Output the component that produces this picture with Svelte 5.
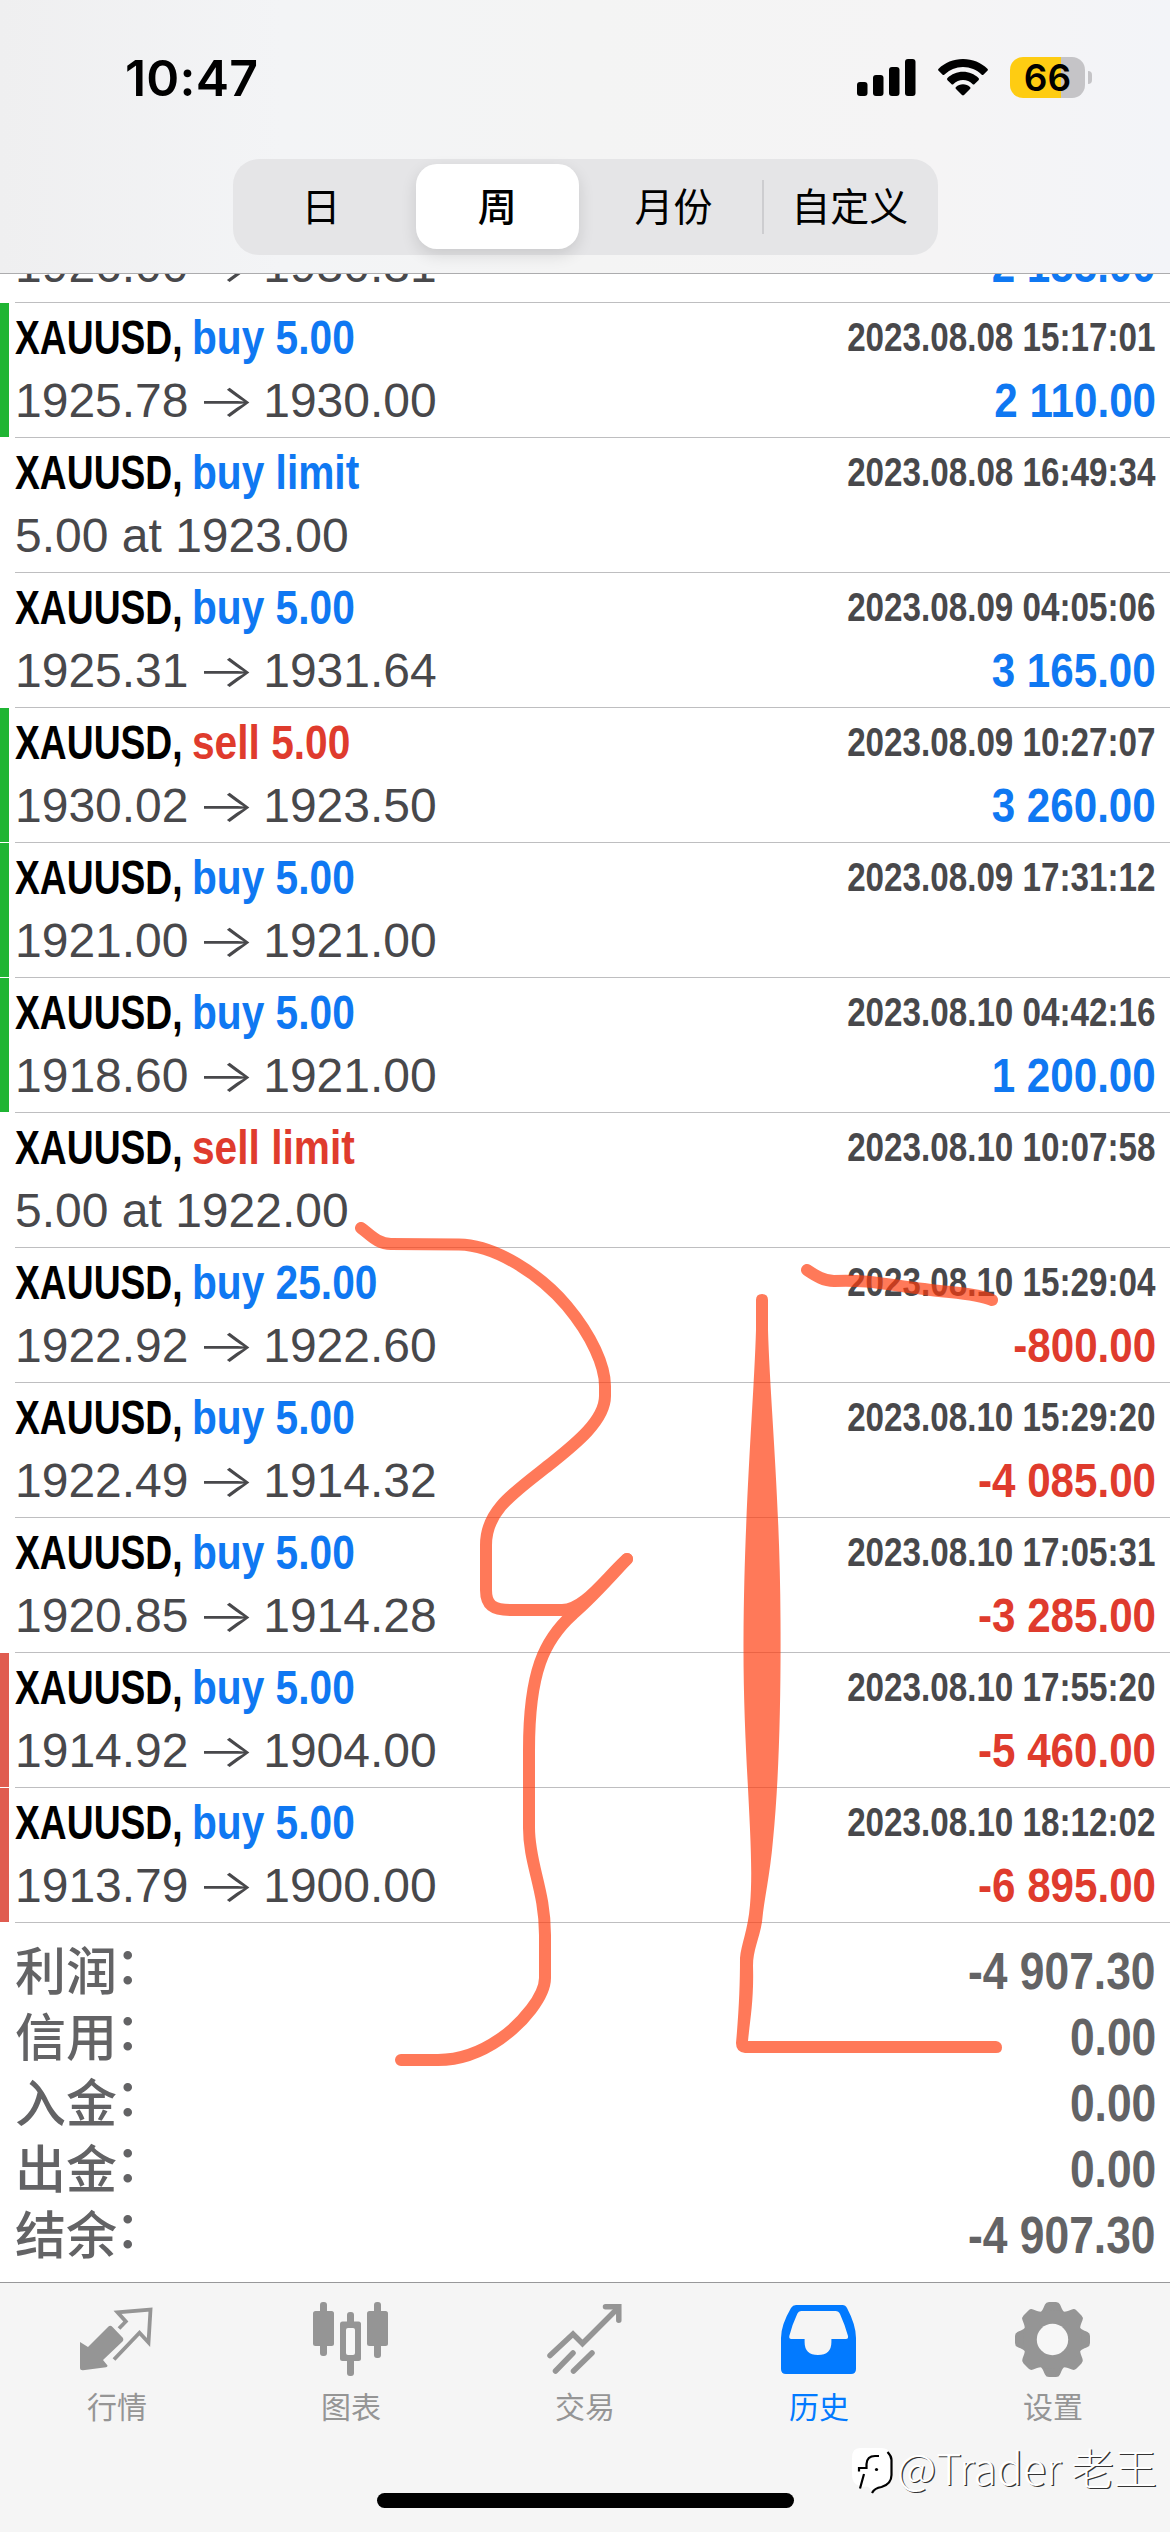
<script lang="ts">
  interface Deal {
    side: 'buy' | 'sell';
    volume: string;
    open?: string;
    close?: string;
    pending?: string;
    time: string;
    profit?: string;
    mark?: 'tp' | 'sl';
  }

  const segments = ['日', '周', '月份', '自定义'];
  let activeSegment = $state(1);

  const deals: Deal[] = [
    { side: 'buy', volume: '5.00', open: '1926.00', close: '1930.31', time: '2023.08.08 14:02:11', profit: '2 155.00' },
    { side: 'buy', volume: '5.00', open: '1925.78', close: '1930.00', time: '2023.08.08 15:17:01', profit: '2 110.00', mark: 'tp' },
    { side: 'buy', volume: 'limit', pending: '5.00 at 1923.00', time: '2023.08.08 16:49:34' },
    { side: 'buy', volume: '5.00', open: '1925.31', close: '1931.64', time: '2023.08.09 04:05:06', profit: '3 165.00' },
    { side: 'sell', volume: '5.00', open: '1930.02', close: '1923.50', time: '2023.08.09 10:27:07', profit: '3 260.00', mark: 'tp' },
    { side: 'buy', volume: '5.00', open: '1921.00', close: '1921.00', time: '2023.08.09 17:31:12', mark: 'tp' },
    { side: 'buy', volume: '5.00', open: '1918.60', close: '1921.00', time: '2023.08.10 04:42:16', profit: '1 200.00', mark: 'tp' },
    { side: 'sell', volume: 'limit', pending: '5.00 at 1922.00', time: '2023.08.10 10:07:58' },
    { side: 'buy', volume: '25.00', open: '1922.92', close: '1922.60', time: '2023.08.10 15:29:04', profit: '-800.00' },
    { side: 'buy', volume: '5.00', open: '1922.49', close: '1914.32', time: '2023.08.10 15:29:20', profit: '-4 085.00' },
    { side: 'buy', volume: '5.00', open: '1920.85', close: '1914.28', time: '2023.08.10 17:05:31', profit: '-3 285.00' },
    { side: 'buy', volume: '5.00', open: '1914.92', close: '1904.00', time: '2023.08.10 17:55:20', profit: '-5 460.00', mark: 'sl' },
    { side: 'buy', volume: '5.00', open: '1913.79', close: '1900.00', time: '2023.08.10 18:12:02', profit: '-6 895.00', mark: 'sl' },
  ];

  const summary = [
    { label: '利润', value: '-4 907.30' },
    { label: '信用', value: '0.00' },
    { label: '入金', value: '0.00' },
    { label: '出金', value: '0.00' },
    { label: '结余', value: '-4 907.30' },
  ];

  const tabs = [
    { id: 'quotes', label: '行情' },
    { id: 'chart', label: '图表' },
    { id: 'trade', label: '交易' },
    { id: 'history', label: '历史' },
    { id: 'settings', label: '设置' },
  ];
  let activeTab = $state('history');

  const teeth = [0, 45, 90, 135, 180, 225, 270, 315];
</script>

<div class="screen">
  <header>
    <div class="status">
      <span class="clock">10:47</span>
      <div class="indicators">
        <svg class="signal" viewBox="0 0 58 38" width="58" height="38">
          <rect x="0" y="23" width="10.5" height="14" rx="3" />
          <rect x="16" y="16" width="10.5" height="21" rx="3" />
          <rect x="32" y="8" width="10.5" height="29" rx="3" />
          <rect x="48" y="0" width="10.5" height="37" rx="3" />
        </svg>
        <svg class="wifi" viewBox="0 0 50 37" width="50" height="37">
          <path d="M25 0C15.500 0 6.800 3.700.600 9.700a1.500 1.500 0 0 0 0 2.100l3.800 3.800a1.500 1.500 0 0 0 2.100 0A26.500 26.500 0 0 1 25 8.100c7.200 0 13.700 2.800 18.500 7.500a1.500 1.500 0 0 0 2.100 0l3.800-3.800a1.500 1.500 0 0 0 0-2.100C43.200 3.700 34.500 0 25 0z" />
          <path d="M25 12.800c-6 0-11.500 2.400-15.500 6.200a1.500 1.500 0 0 0 0 2.200l3.900 3.800a1.500 1.500 0 0 0 2.100 0A13.800 13.800 0 0 1 25 21.100c3.700 0 7 1.500 9.500 3.900a1.500 1.500 0 0 0 2.100 0l3.900-3.800a1.500 1.500 0 0 0 0-2.200c-4-3.800-9.500-6.200-15.500-6.200z" />
          <path d="M25 25.300c-2.700 0-5.100 1-7 2.600a1.400 1.400 0 0 0 0 2.100l6 6a1.500 1.500 0 0 0 2 0l6-6a1.400 1.400 0 0 0 0-2.100c-1.900-1.600-4.300-2.600-7-2.600z" />
        </svg>
        <div class="battery"><span>66</span></div>
        <i class="battery-cap"></i>
      </div>
    </div>
    <div class="segmented">
      {#each segments as segment, i (segment)}
        <button class:active={i === activeSegment} class:divided={i === 3} onclick={() => (activeSegment = i)}>
          {segment}
        </button>
      {/each}
    </div>
  </header>

  <main>
    <div class="deals">
      {#each deals as deal (deal.time)}
        <article class="deal {deal.mark ?? ''}">
          <div class="line">
            <div class="title">
              <span class="symbol">XAUUSD,</span>
              <span class="order {deal.side}">{deal.side} {deal.volume}</span>
            </div>
            <time>{deal.time}</time>
          </div>
          <div class="line">
            {#if deal.pending}
              <span class="price">{deal.pending}</span>
            {:else}
              <span class="price">{deal.open} <i class="arrow">→</i> {deal.close}</span>
            {/if}
            {#if deal.profit}
              <span class="profit" class:loss={deal.profit.startsWith('-')}>{deal.profit}</span>
            {/if}
          </div>
        </article>
      {/each}
    </div>
    <div class="summary">
      {#each summary as item (item.label)}
        <div class="total">
          <span class="label">{item.label}<i>：</i></span>
          <span class="value">{item.value}</span>
        </div>
      {/each}
    </div>
  </main>

  <nav>
    {#each tabs as tab (tab.id)}
      <button class:active={tab.id === activeTab} onclick={() => (activeTab = tab.id)}>
        <svg viewBox="0 0 80 80" width="80" height="80">
          {#if tab.id === 'quotes'}
            <path d="M3 42l8 5 20.500-20.500q2-1.500 4 .5l10.500 11q1 2-.5 3.500L26 60l4.500 5.500q0 1.500-1.500 1.800L6 70.300q-3 .2-3-2z" fill="currentColor" />
            <path d="M42 28.500l6.800-7-8.300-9.200 33-2.800-2 33-9-9.800L37 59.500" fill="none" stroke="currentColor" stroke-width="3.800" stroke-linejoin="miter" />
          {:else if tab.id === 'chart'}
            <g fill="currentColor">
              <rect x="9" y="2" width="7" height="54" rx="3" />
              <rect x="2" y="11" width="21" height="35" rx="2.500" />
              <rect x="63" y="2" width="7" height="56" rx="3" />
              <rect x="56" y="11" width="21" height="35" rx="2.500" />
              <rect x="36" y="12" width="7" height="64" rx="3" />
              <rect x="29" y="21.500" width="21" height="39.500" rx="2.500" />
            </g>
            <rect x="35" y="28" width="9" height="27" rx="2" fill="#f7f7f7" />
          {:else if tab.id === 'trade'}
            <g fill="none" stroke="currentColor" stroke-width="5.500" stroke-linecap="round">
              <path d="M5 55.500L28 34l9.500 9.500L73 8" />
              <path d="M60.500 6.700h13.300v13.500" />
              <path d="M10.500 71L28 53M28.500 71L47 53" />
            </g>
          {:else if tab.id === 'history'}
            <path fill="currentColor" fill-rule="evenodd" d="M17 5h46.500q3 0 4.500 3 9 17 9 30v31q0 5-5 5H7q-5 0-5-5V38Q2 25 12 8q1.800-3 5-3zM22.500 11q-3 0-4.300 3Q13 25 10.300 36q-.5 3 2 3H25.600v3q0 13 13.400 13t13.400-13v-3H67q2.500 0 2-3Q66 25 61 14q-1.300-3-4.500-3z" />
          {:else}
            <g fill="currentColor" transform="translate(39.500 39.500)">
              {#each teeth as angle (angle)}
                <path transform="rotate({angle})" d="M-16-25C-10-27-9.500-31-7.500-35q1-2.500 4-2.500h7q3 0 4 2.500C9.500-31 10-27 16-25z" />
              {/each}
              <circle r="29.500" />
              <circle r="15.700" fill="#f7f7f7" />
            </g>
          {/if}
        </svg>
        <span>{tab.label}</span>
      </button>
    {/each}
    <div class="home-indicator"></div>
  </nav>

  <svg class="marker" viewBox="0 0 1170 2532" width="1170" height="2532">
    <path d="M361 1228C370 1234 377 1244 391 1244L459 1244.500C495 1245 540 1274 567 1306C592 1336 605 1366 605 1386V1396C605 1421 574 1445 549 1465C512 1494 486 1511 486 1545V1590C486 1605 493 1610 510 1610H562C584 1610 604 1580 627 1559" />
    <path d="M627 1559C613 1574 593 1597 573 1614C544 1640 529 1672 529 1750V1828C529 1864 545 1890 545 1935V1978C545 1996 523 2023 500 2039C474 2057 451 2060 438 2060H401" />
    <path d="M807 1270C816 1276 824 1281 834 1281C868 1279 894 1286 924 1289C950 1293 976 1293 992 1300" />
    <path class="taper" d="M756 1300Q756 1294 762 1294Q768 1294 768 1300V1330C770 1400 780 1500 780.500 1620C781 1700 779 1780 773 1840C770 1875 764 1900 762 1922C759 1940 753 1950 753 1966C754 2000 750 2020 748 2041H996Q1002 2042 1002 2047.500T996 2053H745Q736 2052 736 2043C739 2010 740 1985 740 1958C741 1945 748 1930 750 1905C755 1850 743 1760 743.500 1640C744 1510 754 1400 756 1330z" />
  </svg>

  <div class="watermark">
    <svg viewBox="0 0 44 50" width="44" height="50">
      <path d="M10 2H31Q41 2 41 13V29Q41 39 30 41Q24 43 23 47Q21 42 17 40.500Q2 42 2 28V12Q2 2 10 2z" fill="#fff" />
      <path d="M29 10h-4q-8 0-8.500 8v4H9v3.500M14 28l-4 14.500M37.500 6Q41.500 10 41.500 14V29q0 9-10 12-7 1-9.500 6" fill="none" stroke="#000" stroke-width="2.200" />
      <circle cx="26.500" cy="23.500" r="1.600" />
    </svg>
    <span>@Trader 老王</span>
  </div>
</div>

<style>
  :global(body) {
    background: #fff;
  }

  .screen {
    position: relative;
    width: 1170px;
    height: 2532px;
    overflow: hidden;
    display: flex;
    flex-direction: column;
    background: #fff;
    font-family: 'Liberation Sans', 'Noto Sans CJK SC', sans-serif;
  }

  button {
    border: none;
    background: none;
    padding: 0;
    font-family: inherit;
    cursor: pointer;
  }

  header {
    flex: none;
    box-sizing: border-box;
    height: 274px;
    border-bottom: 1px solid #acacae;
    background: linear-gradient(90deg, #efeff0, #f3f4f6 24%, #f4f4f4 50%, #f5f4f5 80%, #f3f4f8);
  }

  .status {
    display: flex;
    justify-content: space-between;
    height: 159px;
    padding: 0 78px 0 125px;
  }

  .clock {
    padding-top: 48px;
    font: 600 50px/60px Inter, sans-serif;
    letter-spacing: 0.2px;
  }

  .indicators {
    display: flex;
    align-items: flex-start;
    padding-top: 57px;
  }

  .signal {
    margin: 2px 23px 0 0;
    overflow: visible;
  }

  .wifi {
    margin: 2px 22px 0 0;
  }

  .battery {
    width: 75px;
    height: 41px;
    border-radius: 13px;
    background: linear-gradient(90deg, #fecc12 68%, #c5c4c7 68%);
    text-align: center;
    font: 600 37px/41px Inter, sans-serif;
  }

  .battery-cap {
    width: 4px;
    height: 13px;
    margin: 14px 0 0 3px;
    border-radius: 0 5px 5px 0;
    background: #c5c4c7;
  }

  .segmented {
    display: grid;
    grid-template-columns: repeat(4, 1fr);
    box-sizing: border-box;
    width: 705px;
    height: 96px;
    margin: 0 auto 0 233px;
    padding: 5px 0 6px;
    border-radius: 26px;
    background: #e5e5e7;
  }

  .segmented button {
    padding-bottom: 5px;
    font: 400 39px/80px 'Noto Sans CJK SC', sans-serif;
    color: #000;
  }

  .segmented .active {
    margin: 0 7px;
    border-radius: 21px;
    background: #fff;
    box-shadow: 0 6px 16px rgba(0, 0, 0, 0.12);
    font-weight: 500;
  }

  .segmented .divided {
    background: linear-gradient(#cdcdd0, #cdcdd0) left center / 2px 54px no-repeat;
  }

  main {
    flex: 1;
    min-height: 0;
    display: flex;
    flex-direction: column;
    overflow: hidden;
  }

  .deals {
    margin-top: -106px;
  }

  .deal {
    position: relative;
    box-sizing: border-box;
    height: 135px;
    padding: 6px 15px 0;
    display: flex;
    flex-direction: column;
    gap: 8px;
    background: linear-gradient(#bebec0, #bebec0) 15px bottom / 100% 1px no-repeat;
  }

  .deal.tp::before,
  .deal.sl::before {
    content: '';
    position: absolute;
    left: 0;
    top: 0;
    bottom: 1px;
    width: 9px;
    background: #1fb533;
  }

  .deal.sl::before {
    background: #e05c50;
  }

  .line {
    display: flex;
    justify-content: space-between;
    height: 56px;
    line-height: 56px;
    white-space: nowrap;
  }

  .title {
    display: flex;
    font-size: 49px;
    font-weight: 700;
  }

  .symbol {
    width: 177px;
    transform: scaleX(0.76);
    transform-origin: left;
  }

  .order {
    transform: scaleX(0.83);
    transform-origin: left;
  }

  .buy {
    color: #0f78f2;
  }

  .sell {
    color: #df3b2d;
  }

  time {
    font-size: 40px;
    font-weight: 700;
    color: #48484b;
    transform: scaleX(0.83);
    transform-origin: right;
  }

  .price {
    font-size: 48px;
    color: #48484b;
  }

  .arrow {
    display: inline-block;
    width: 48px;
    font: 300 46px/50px Inter, sans-serif;
    text-align: center;
    transform: scaleX(1.35);
  }

  .profit {
    margin-top: -1px;
    margin-right: -1px;
    font-size: 49px;
    font-weight: 700;
    color: #0f78f2;
    transform: scaleX(0.86);
    transform-origin: right;
  }

  .loss {
    color: #df3b2d;
  }

  .summary {
    padding: 15px 14px 0 15px;
  }

  .total {
    display: flex;
    justify-content: space-between;
    height: 66px;
    line-height: 66px;
    color: #636365;
    white-space: nowrap;
  }

  .label {
    margin-top: -3px;
    font-family: 'Noto Sans CJK SC', sans-serif;
    font-size: 51px;
    font-weight: 500;
  }

  .label i {
    position: relative;
    top: -6px;
    left: -2px;
    font-style: normal;
  }

  .value {
    margin-top: 1px;
    font-size: 51px;
    font-weight: 700;
    transform: scaleX(0.87);
    transform-origin: right;
  }

  nav {
    flex: none;
    position: relative;
    box-sizing: border-box;
    height: 250px;
    padding-top: 17px;
    border-top: 1px solid #98989a;
    display: grid;
    grid-template-columns: repeat(5, 1fr);
    background: #f5f5f5;
  }

  nav button {
    display: flex;
    flex-direction: column;
    align-items: center;
    height: 140px;
    color: #959595;
  }

  nav .active {
    color: #027aff;
  }

  nav span {
    margin-top: 5px;
    font: 400 30px/40px 'Noto Sans CJK SC', sans-serif;
  }

  .home-indicator {
    position: absolute;
    left: 377px;
    bottom: 24px;
    width: 417px;
    height: 15px;
    border-radius: 8px;
    background: #000;
  }

  .marker {
    position: absolute;
    inset: 0;
    opacity: 0.68;
    pointer-events: none;
  }

  .marker path {
    fill: none;
    stroke: #ff3a0c;
    stroke-width: 12px;
    stroke-linecap: round;
    stroke-linejoin: round;
  }

  .marker .taper {
    fill: #ff3a0c;
    stroke: none;
  }

  .watermark {
    position: absolute;
    left: 850px;
    top: 2446px;
    display: flex;
    gap: 3px;
    color: #fff;
    font: 300 43px/50px 'Noto Sans CJK SC', sans-serif;
    text-shadow: 1.3px 1.3px 0 #333;
    white-space: nowrap;
  }

  .watermark span {
    margin-top: -5px;
  }
</style>
